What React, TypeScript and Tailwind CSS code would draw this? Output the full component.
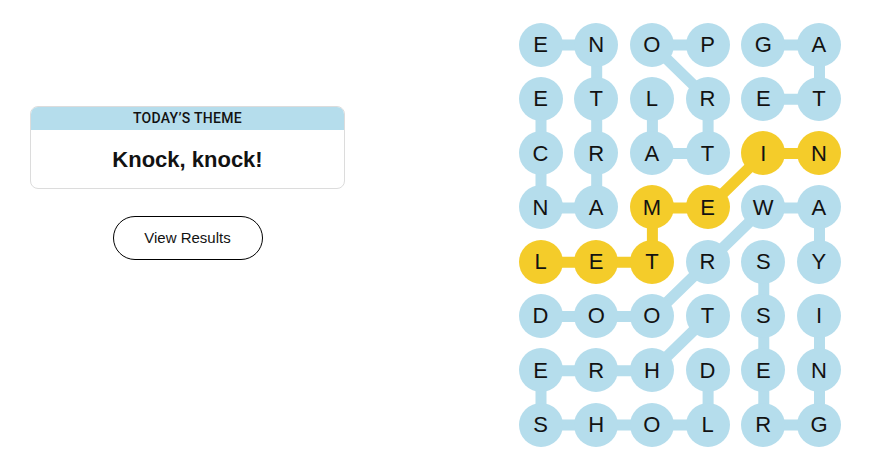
import React from 'react';

const ROWS = ['ENOPGA', 'ETLRET', 'CRATIN', 'NAMEWA', 'LETRSY', 'DOOTSI', 'ERHDEN', 'SHOLRG'];

const BLUE = '#b5ddec';
const YELLOW = '#f4cc2a';

type Cell = [number, number];

// found words, in letter order
const WORDS: { cells: Cell[]; spangram?: boolean }[] = [
  { cells: [[0, 0], [0, 1], [1, 1], [2, 1], [3, 1], [3, 0], [2, 0], [1, 0]] },
  { cells: [[0, 3], [0, 2], [1, 3], [2, 3], [2, 2], [1, 2]] },
  { cells: [[0, 4], [0, 5], [1, 5], [1, 4]] },
  { cells: [[5, 0], [5, 1], [5, 2], [4, 3], [3, 4], [3, 5], [4, 5]] },
  { cells: [[5, 3], [6, 2], [6, 1], [6, 0], [7, 0], [7, 1], [7, 2], [7, 3], [6, 3]] },
  { cells: [[5, 5], [6, 5], [7, 5], [7, 4], [6, 4], [5, 4], [4, 4]] },
  { cells: [[4, 0], [4, 1], [4, 2], [3, 2], [3, 3], [2, 4], [2, 5]], spangram: true },
];

const COL_STEP = 55.7;
const ROW_STEP = 54.3;
const cx = (c: number) => 22 + c * COL_STEP;
const cy = (r: number) => 22 + r * ROW_STEP;

const isSpangram = (r: number, c: number) =>
  WORDS.some((w) => w.spangram && w.cells.some(([a, b]) => a === r && b === c));

const Board: React.FC = () => {
  return (
    <div className="relative w-[322.5px] h-[424.1px]">
      <svg className="absolute inset-0" width="322.5" height="424.1">
        {WORDS.map((w, i) => (
          <polyline
            key={i}
            points={w.cells.map(([r, c]) => `${cx(c)},${cy(r)}`).join(' ')}
            fill="none"
            stroke={w.spangram ? YELLOW : BLUE}
            strokeWidth={11}
          />
        ))}
      </svg>
      <div className="relative grid grid-cols-[repeat(6,44px)] gap-x-[11.7px] gap-y-[10.3px]">
        {ROWS.map((row, r) =>
          row.split('').map((ch, c) => (
            <div
              key={`${r}-${c}`}
              className={`w-[44px] h-[44px] rounded-full flex items-center justify-center text-[22px] text-[#121212] ${
                isSpangram(r, c) ? 'bg-[#f4cc2a]' : 'bg-[#b5ddec]'
              }`}
            >
              {ch}
            </div>
          ))
        )}
      </div>
    </div>
  );
}

export default function App() {
  return (
    <div className="flex bg-white h-[471px] font-['Liberation_Sans',Arial,sans-serif]">
      <div className="w-[375px] px-[30px] pt-[106px] flex flex-col items-center">
        <div className="w-full border border-[#dcdcdc] rounded-lg overflow-hidden">
          <div className="bg-[#b5ddec] h-[23px] flex items-center justify-center font-['Roboto',sans-serif] text-[14px] font-medium tracking-[0.3px] text-[#121212]">
            TODAY’S THEME
          </div>
          <div className="h-[58px] flex items-center justify-center text-[22px] font-bold text-[#121212]">
            Knock, knock!
          </div>
        </div>
        <button className="mt-[27px] w-[150px] h-[44px] rounded-full border border-black text-[15px] text-[#121212] bg-white">
          View Results
        </button>
      </div>
      <div className="ml-[143.5px] pt-[22.5px]">
        <Board />
      </div>
    </div>
  );
}
